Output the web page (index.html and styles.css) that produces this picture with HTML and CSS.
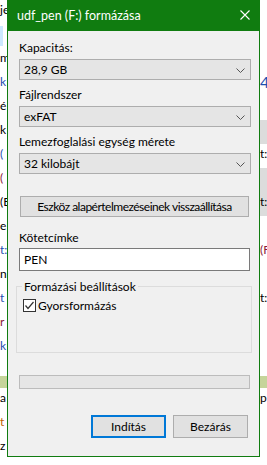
FILE: index.html
```html
<!DOCTYPE html>
<html lang="hu">
<head>
  <meta charset="UTF-8">
  <meta name="viewport" content="width=device-width, initial-scale=1.0">
  <title>udf_pen (F:) formázása</title>
  <link rel="stylesheet" href="styles.css">
</head>
<body>

  <!-- Window behind the dialog -->
  <div class="backdrop">
    <div class="strip strip-left">
      <div class="bg-row">je</div>
      <div class="bg-row sel"></div>
      <div class="bg-row">m</div>
      <div class="bg-row blue">k</div>
      <div class="bg-row">é</div>
      <div class="bg-row">k</div>
      <div class="bg-row blue">(</div>
      <div class="bg-row red">(</div>
      <div class="bg-row">(B</div>
      <div class="bg-row">e</div>
      <div class="bg-row blue">t:</div>
      <div class="bg-row">n</div>
      <div class="bg-row blue">t</div>
      <div class="bg-row red">r</div>
      <div class="bg-row blue">k</div>
      <div class="bg-row band"></div>
      <div class="bg-row">a</div>
      <div class="bg-row orange">t</div>
      <div class="bg-row">z</div>
    </div>
    <div class="strip strip-right">
      <div class="bg-row"></div>
      <div class="bg-row"></div>
      <div class="bg-row"></div>
      <div class="bg-row big blue">4</div>
      <div class="bg-row"></div>
      <div class="bg-row grey"></div>
      <div class="bg-row">t:</div>
      <div class="bg-row grey"></div>
      <div class="bg-row grey">t:</div>
      <div class="bg-row"></div>
      <div class="bg-row red">(F</div>
      <div class="bg-row"></div>
      <div class="bg-row">t:</div>
      <div class="bg-row"></div>
      <div class="bg-row"></div>
      <div class="bg-row band"></div>
      <div class="bg-row">p</div>
    </div>
  </div>
  <div class="statusline">28,9 GB szabad hely, összesen 28,9 GB</div>

  <!-- Format dialog -->
  <div class="dialog">
    <div class="titlebar">
      <span class="title">udf_pen (F:) formázása</span>
      <svg class="close" width="10" height="10" viewBox="0 0 10 10">
        <path d="M0.5 0.5 L9.5 9.5 M9.5 0.5 L0.5 9.5" stroke="#fff" stroke-width="1.1" fill="none"/>
      </svg>
    </div>

    <div class="content">
      <label class="field-label first">Kapacitás:</label>
      <div class="combo">
        <span>28,9 GB</span>
        <svg class="chevron" width="9" height="5" viewBox="0 0 9 5"><path d="M0.5 0.5 L4.5 4.5 L8.5 0.5" stroke="#555" fill="none"/></svg>
      </div>

      <label class="field-label">Fájlrendszer</label>
      <div class="combo">
        <span>exFAT</span>
        <svg class="chevron" width="9" height="5" viewBox="0 0 9 5"><path d="M0.5 0.5 L4.5 4.5 L8.5 0.5" stroke="#555" fill="none"/></svg>
      </div>

      <label class="field-label">Lemezfoglalási egység mérete</label>
      <div class="combo">
        <span>32 kilobájt</span>
        <svg class="chevron" width="9" height="5" viewBox="0 0 9 5"><path d="M0.5 0.5 L4.5 4.5 L8.5 0.5" stroke="#555" fill="none"/></svg>
      </div>

      <button class="btn wide">Eszköz alapértelmezéseinek visszaállítása</button>

      <label class="field-label volume">Kötetcímke</label>
      <div class="textbox">PEN</div>

      <fieldset class="group">
        <legend>Formázási beállítások</legend>
        <div class="check-row">
          <svg class="checkbox" width="13" height="13" viewBox="0 0 13 13">
            <rect x="0.5" y="0.5" width="12" height="12" fill="#fff" stroke="#333"/>
            <path d="M2.5 6.5 L5 9.5 L10.5 3" stroke="#333" stroke-width="1.2" fill="none"/>
          </svg>
          <span>Gyorsformázás</span>
        </div>
      </fieldset>

      <div class="progress"></div>

      <div class="actions">
        <button class="btn default">Indítás</button>
        <button class="btn">Bezárás</button>
      </div>
    </div>
  </div>

</body>
</html>
```

FILE: styles.css
```css
body { margin: 0; width: 267px; height: 465px; overflow: hidden; position: relative; background: #fff; font-family: Lato, "Liberation Sans", sans-serif; font-size: 12px; color: #000; }

/* backdrop window */
.backdrop { display: flex; justify-content: space-between; height: 457px; }
.strip { width: 7px; overflow: hidden; white-space: nowrap; display: flex; flex-direction: column; }
.bg-row { height: 24px; line-height: 20px; flex: none; }
.bg-row.big { font-size: 16px; }
.blue { color: #1f4fb0; }
.red { color: #8b1a3a; }
.orange { color: #c06000; }
.strip-left .sel { background: linear-gradient(to right, #cde8ff 3px, transparent 3px); height: 20px; margin: 2px 0 2px; }
.grey { background: #dcdcdc; }
.band { background: #c5d49a; height: 12px; margin: 16px 0 0; }
.statusline { padding-left: 18px; line-height: 14px; margin-top: 6px; white-space: nowrap; }

/* dialog */
.dialog { position: absolute; left: 7px; top: 0; width: 251px; height: 456px; border: 1px solid #107c10; border-top: none; background: #f0f0f0; display: flex; flex-direction: column; }
.titlebar { height: 31px; background: #107c10; color: #fff; display: flex; align-items: center; justify-content: space-between; padding: 0 9px 0 9px; flex: none; }
.title { font-size: 12.5px; margin-top: -1px; }
.close { margin-top: -1px; }

.content { display: flex; flex-direction: column; padding: 0 10px 0 11px; }
.field-label { display: block; line-height: 15px; margin: 7px 0 4px; }
.field-label.first { margin-top: 9px; }
.field-label.volume { margin: 13px 0 3px; }

.combo { height: 19px; border: 1px solid #adadad; background: #e5e5e5; display: flex; align-items: center; justify-content: space-between; padding: 0 5px 0 4px; width: 221px; }
.chevron { margin-top: 1px; }

.btn { font-family: inherit; font-size: 12px; color: #000; background: #e1e1e1; border: 1px solid #adadad; height: 22px; padding: 0; cursor: default; }
.btn.wide { width: 229px; height: 21px; margin: 22px 0 0 1px; letter-spacing: -0.5px; }

.textbox { height: 21px; border: 1px solid #7a7a7a; background: #fff; width: 225px; padding-left: 4px; line-height: 21px; }

.group { border: 1px solid #dcdcdc; margin: 8px 0 0 -3px; padding: 4px 6px 0 6px; width: 222px; height: 68px; }
.group legend { padding: 0 2px; margin-left: -1px; line-height: 15px; }
.check-row { display: flex; align-items: center; gap: 2px; }

.progress { height: 12px; border: 1px solid #bcbcbc; background: #e6e6e6; width: 229px; margin-top: 22px; }

.actions { display: flex; justify-content: flex-end; gap: 7px; margin-top: 26px; padding-right: 1px; }
.actions .btn { width: 75px; height: 23px; }
.actions .btn.default { border: 2px solid #0078d7; }
```
